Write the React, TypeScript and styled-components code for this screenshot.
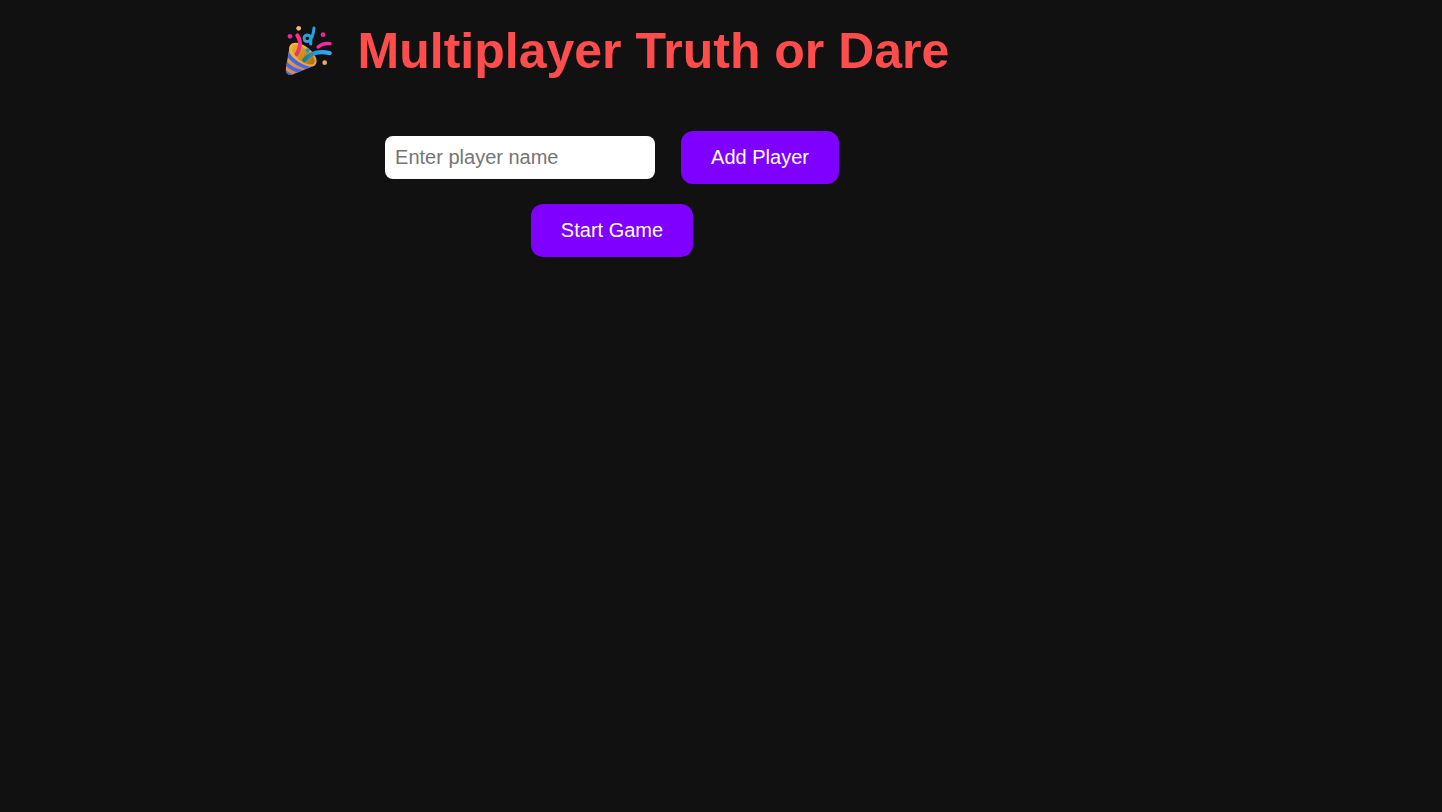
import React, { useState } from "react";
import styled, { createGlobalStyle } from "styled-components";

const GlobalStyle = createGlobalStyle`
  body {
    margin: 0;
    background: #111111;
    color: #ffffff;
    font-family: Arial, "Liberation Sans", sans-serif;
  }
`;

const Page = styled.main`
  display: flex;
  flex-direction: column;
  align-items: center;
  padding: 21px 218px 20px 0;
`;

const Title = styled.h1`
  display: flex;
  align-items: center;
  gap: 16px;
  margin: 0 0 50px;
  color: #ff4d4d;
  font-size: 50px;
  line-height: 57px;
  white-space: nowrap;
`;

const Popper = styled.svg`
  width: 67px;
  height: 60px;
  flex: none;
`;

const PlayerForm = styled.form`
  display: flex;
  align-items: center;
  gap: 26px;
  margin-bottom: 20px;
`;

const NameInput = styled.input`
  box-sizing: border-box;
  width: 270px;
  height: 43px;
  padding: 10px;
  border: none;
  border-radius: 8px;
  font-family: inherit;
  font-size: 20px;
  line-height: 23px;

  &::placeholder {
    color: #757575;
  }
`;

const Button = styled.button`
  padding: 15px 30px;
  border: none;
  border-radius: 12px;
  background: #8000ff;
  color: #ffffff;
  font-family: inherit;
  font-size: 20px;
  line-height: 23px;
  cursor: pointer;
`;

const PlayerList = styled.ul`
  margin: 20px 0 0;
  padding: 0;
  list-style: none;
  font-size: 20px;
  text-align: center;
`;

function PartyPopper() {
  return (
    <Popper viewBox="-10 3 201 180" aria-hidden="true">
      <defs>
        <linearGradient id="cone" x1="0" y1="0" x2="0.6" y2="1">
          <stop offset="0" stopColor="#fbb52f" />
          <stop offset="1" stopColor="#e3764f" />
        </linearGradient>
        <linearGradient id="mouth" x1="0" y1="0" x2="1" y2="0">
          <stop offset="0" stopColor="#f0b01f" />
          <stop offset="1" stopColor="#a87019" />
        </linearGradient>
        <linearGradient id="rim" x1="0" y1="0" x2="1" y2="0">
          <stop offset="0" stopColor="#fdb735" />
          <stop offset="1" stopColor="#eba04a" />
        </linearGradient>
        <linearGradient id="stream" x1="0" y1="0" x2="1" y2="0">
          <stop offset="0" stopColor="#157f9f" />
          <stop offset="0.5" stopColor="#2a9be0" />
          <stop offset="1" stopColor="#3aa7f5" />
        </linearGradient>
        <linearGradient id="ribbon" x1="0" y1="0" x2="0" y2="1">
          <stop offset="0" stopColor="#ff2f8e" />
          <stop offset="1" stopColor="#e9317d" />
        </linearGradient>
        <clipPath id="coneShape">
          <path d="M34 80 L22 148 Q22 167 41 164 L111 136 Q100 92 34 80Z" />
        </clipPath>
      </defs>
      <g clipPath="url(#coneShape)">
        <rect x="15" y="65" width="105" height="105" fill="url(#cone)" />
        <g fill="none" stroke="#3a6cf0" strokeWidth="11">
          <path d="M26 97 Q46 137 106 145" />
          <path d="M18 124 Q38 152 82 158" />
          <path d="M14 150 Q28 166 52 171" />
        </g>
      </g>
      <ellipse
        cx="74"
        cy="104"
        rx="45"
        ry="22"
        transform="rotate(38 74 104)"
        fill="url(#mouth)"
        stroke="url(#rim)"
        strokeWidth="6"
      />
      <g fill="none" strokeLinecap="round">
        <path d="M57 46 Q69 64 63 84 Q60 94 55 103" stroke="url(#ribbon)" strokeWidth="12" />
        <path d="M78 120 Q104 88 154 99" stroke="url(#stream)" strokeWidth="13" />
        <path d="M119 81 Q134 68 155 71" stroke="#f42aa0" strokeWidth="10" />
        <path
          d="M107 24 Q105 46 97 58 Q88 70 79 61 Q73 48 86 45 Q101 45 97 72"
          stroke="#2c9fe0"
          strokeWidth="9"
          strokeLinejoin="round"
        />
      </g>
      <circle cx="61" cy="25" r="7" fill="#f5bf55" />
      <circle cx="35" cy="49" r="7" fill="#e9279d" />
      <circle cx="134" cy="44" r="7" fill="#e9279d" />
      <circle cx="88" cy="91" r="6" fill="#2e8fcb" />
      <circle cx="139" cy="128" r="7" fill="#f1a858" />
    </Popper>
  );
}

export default function App() {
  const [name, setName] = useState("");
  const [players, setPlayers] = useState<string[]>([]);

  const addPlayer = (event: React.FormEvent) => {
    event.preventDefault();
    const trimmed = name.trim();
    if (!trimmed) return;
    setPlayers([...players, trimmed]);
    setName("");
  };

  return (
    <>
      <GlobalStyle />
      <Page>
        <Title>
          <PartyPopper />
          Multiplayer Truth or Dare
        </Title>
        <PlayerForm onSubmit={addPlayer}>
          <NameInput
            type="text"
            aria-label="Player name"
            placeholder="Enter player name"
            value={name}
            onChange={(event) => setName(event.target.value)}
          />
          <Button type="submit">Add Player</Button>
        </PlayerForm>
        <Button type="button">Start Game</Button>
        {players.length > 0 && (
          <PlayerList>
            {players.map((player, index) => (
              <li key={index}>{player}</li>
            ))}
          </PlayerList>
        )}
      </Page>
    </>
  );
}
